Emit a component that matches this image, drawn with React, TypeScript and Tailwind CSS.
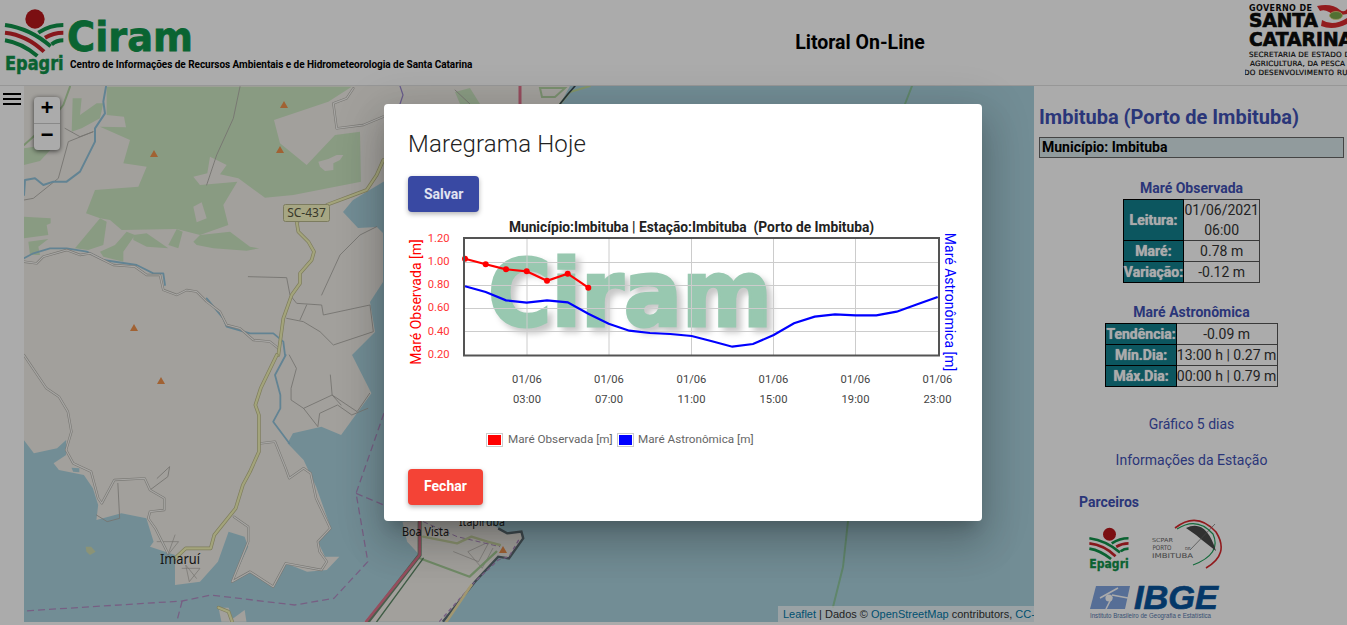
import React from "react";

const Z7 = "translate(0 85) scale(0.33333)";
const Z8 = "translate(0 355) scale(0.35714 0.33333)";

const LAND = "#f2efe9";
const FOREST = "#cde7c2";
const WATER = "#aad3df";

const coastZ8 =
  "1040,115 955,240 900,215 820,235 805,265 850,315 885,395 920,500 925,520 890,560 910,605 950,605 915,645 860,650 800,625 765,695 700,650 650,680 695,575 685,545 640,530 610,620 560,680 490,690 490,600 420,575 430,560 410,490 340,475 270,495 275,450 260,400 235,360 165,345 150,325 185,300 185,255 160,280 95,295 67,255";

const westLand =
  "24,86 570,86 560,104 500,130 383,182 353,200 343,212 358,228 377,227 383,233 383,282 370,302 375,332 352,355 " +
  coastZ8
    .split(" ")
    .map((s) => {
      const [x, y] = s.split(",").map(Number);
      return `${(x / 2.8).toFixed(1)},${(355 + y / 3).toFixed(1)}`;
    })
    .join(" ") +
  " 24,440";

function Line({ p, c, w, dash }: { p: string; c: string; w: number; dash?: string }) {
  return (
    <polyline
      points={p}
      fill="none"
      stroke={c}
      strokeWidth={w}
      strokeDasharray={dash}
      strokeLinejoin="round"
      strokeLinecap={dash ? "butt" : "round"}
      vectorEffect="non-scaling-stroke"
    />
  );
}

function Cased({ p }: { p: string }) {
  return (
    <>
      <Line p={p} c="#b4b2ac" w={2.4} />
      <Line p={p} c="#f8f7f3" w={1.2} />
    </>
  );
}

function Yellow({ p }: { p: string }) {
  return (
    <>
      <Line p={p} c="#bcbb8a" w={3.6} />
      <Line p={p} c="#f4f5b8" w={2.2} />
    </>
  );
}

function Peak({ x, y }: { x: number; y: number }) {
  return <polygon points={`${x},${y - 4} ${x + 4},${y + 3} ${x - 4},${y + 3}`} fill="#f0924c" />;
}

function MapArt() {
  const thin = "#b0aea8";
  const river = "#93c4dc";
  const admin = "#b28ec4";
  return (
    <svg viewBox="24 86 1010 536" className="block h-full w-full">
      <rect x="24" y="86" width="1010" height="536" fill={WATER} />
      <polygon points={westLand} fill={LAND} />
      <g transform={Z8}>
        <polygon
          fill={LAND}
          points="1127,500 1140,560 1175,600 1020,800 1240,800 1330,680 1395,605 1425,610 1465,550 1460,530 1420,535 1380,510 1300,490"
        />
        <polyline
          points="1240,800 1330,680 1395,605 1425,610 1465,550 1460,530 1420,535 1395,520"
          fill="none"
          stroke="#5f6f76"
          strokeWidth="2.4"
          vectorEffect="non-scaling-stroke"
        />
        <polygon points="612,758 640,758 655,800 620,800" fill={LAND} />
        <polygon points="640,800 685,765 690,800" fill={LAND} />
        <polygon points="240,575 255,575 268,590 252,600 242,590" fill="#cfdcb0" />
        <polygon points="200,338 222,340 222,352 205,350" fill={WATER} />
      </g>
      <g transform={Z7}>
        <polygon points="72,240 72,190 170,175 120,228" fill={FOREST} />
        <polygon points="218,40 245,40 240,90 290,55 310,55 300,100 245,130 215,140" fill={FOREST} />
        <polygon
          fill={FOREST}
          points="320,5 1055,5 985,50 822,105 840,175 920,240 1005,150 1080,140 1083,290 880,330 795,338 715,280 660,268 680,240 630,215 622,265 580,275 600,300 712,290 670,360 685,420 600,450 530,432 365,435 330,405 300,400 258,385 285,315 415,305 440,245 370,235 390,165 300,125 378,127 372,95 320,90"
        />
        <polygon points="580,365 605,352 620,400 590,412" fill={LAND} />
        <polygon points="505,480 530,432 548,440 535,490" fill={FOREST} />
        <polygon points="580,470 600,450 690,440 750,485 778,490 740,497 640,490 590,480" fill={FOREST} />
        <polygon points="400,450 440,445 505,490 440,485 400,465" fill={FOREST} />
        <polygon points="345,480 380,440 405,450 370,500 370,530 310,515 300,500" fill={FOREST} />
        <polygon points="225,490 300,400 320,410 310,480 265,495" fill={FOREST} />
        <polygon points="72,395 152,400 152,415 140,420 145,450 72,460" fill={FOREST} />
        <polygon points="85,470 145,462 115,485 120,510 90,510" fill={FOREST} />
        <polygon points="955,230 985,222 1010,210 1030,210 1020,225 1000,235 1000,255 975,258 960,245" fill={LAND} />
        <Line p="72,180 150,110 190,60 210,5" c="#b5d6a5" w={2} />
        <Line p="195,130 240,155 280,140 205,170 175,280 100,340 72,345" c={thin} w={0.9} />
        <Line p="720,5 700,100 650,210 620,300" c={thin} w={0.9} />
        <Line p="745,575 860,578 870,630 890,655 965,660 970,690 1110,660 1120,740 1000,780 960,740 910,710 860,700" c={thin} w={0.9} />
        <Line p="965,630 1020,510 1080,450 1130,425" c={thin} w={0.9} />
        <Line p="920,660 900,705" c={thin} w={0.9} />
        <Line p="318,5 310,50 315,85 285,130 285,170 240,260 200,290 160,290 130,300 105,280 75,285 72,330" c={river} w={2} />
        <Line p="72,520 100,505 150,490 200,490 260,500 310,525 410,540 460,565 490,565 495,600" c={river} w={1.8} />
        <Line p="620,640 670,700 680,725 750,745 820,745 850,770 855,810" c={river} w={1.8} />
        <Cased p="72,530 110,535 130,515 200,495 240,510 270,505 340,540 405,545 440,570 480,570 490,615 530,630 560,615 590,620 620,650 660,680 680,720 720,730 760,765 810,770 835,790" />
        <Cased p="1060,10 1040,40 1000,55 1010,130 1090,120 1150,95" />
        <Yellow p="1150,225 1130,270 1100,315 1060,330 985,358 890,410 895,440 925,470 942,500 935,525 900,565 900,595 875,630 850,700 835,810" />
      </g>
      <g transform={Z8}>
        <Line p="810,0 830,40 815,100 815,135 850,160 930,120 1000,170 1035,115" c={thin} w={0.9} />
        <Line p="850,160 890,215 895,175 945,150 985,180 1030,160" c={thin} w={0.9} />
        <Line p="925,60 930,120 955,150" c={thin} w={0.9} />
        <Line p="440,370 475,335 470,365 420,405" c={thin} w={0.9} />
        <Line p="270,480 300,500 335,490 330,385" c={thin} w={0.9} />
        <Line p="440,560 500,560 470,600 490,540" c={thin} w={0.7} />
        <Line p="510,640 560,640 530,680 520,630 550,670" c={thin} w={0.7} />
        <Line p="1270,590 1340,620 1370,560 1310,590 1350,640 1380,580" c={thin} w={0.7} />
        <Line p="800,0 770,60 785,120 785,160 765,200 810,265" c={river} w={1.8} />
        <Cased p="67,0 130,100 165,125 190,170 195,200 200,230 185,285 205,325 255,350 275,430 285,445 320,375 405,370 420,405 460,430 460,465 420,470 415,490 435,520 470,595" />
        <Cased p="730,265 770,260 800,340 810,370 850,340 870,355 885,430 925,520 890,560 895,590 915,620 900,645 800,625 765,695 700,650 650,680 695,560 695,515 655,485" />
        <Yellow p="775,0 730,100 715,150 725,180 725,290 700,350 680,390 660,460 600,540 590,580 520,580 490,610" />
        <Yellow p="612,758 640,770 650,800" />
        <Line p="1075,175 997,415 1030,620 935,730 825,750 590,720 510,738 67,768" c={admin} w={1.3} dash="7 4" />
        <Line p="997,415 1075,450" c={admin} w={1.3} dash="7 4" />
        <Line p="510,738 495,800" c={admin} w={1.3} dash="7 4" />
        <Line p="1230,800 1330,680 1395,615 1425,605 1455,550" c={admin} w={1.3} dash="4 3" />
        <Line p="1185,500 1280,545 1400,575" c={admin} w={1} dash="5 3" />
        <Line p="1185,545 1280,565 1320,545 1365,560 1400,570" c="#cdd8a4" w={2.4} />
        <Line p="1175,610 1315,665 1390,590" c="#a9d09a" w={2.2} />
        <Line p="1250,800 1320,690" c="#f1e2a8" w={2.6} />
        <Line p="1175,500 1175,600 1030,800" c="#6f8c72" w={4} />
        <Line p="1175,500 1175,600 1025,800" c="#e0738c" w={2.6} />
        <Line p="1185,610 1055,800" c="#5f8a68" w={1.4} />
      </g>
      {/* strip above the dialog */}
      <polygon points="455,92 470,88 480,104 460,104" fill={FOREST} />
      <Line p="400,86 403,95 400,104" c="#9a88cf" w={1.2} />
      <Line p="455,90 470,104" c={thin} w={0.9} />
      <Line p="520,86 520,104" c="#e0738c" w={3} />
      <polygon points="540,88 565,88 555,97 542,97" fill="none" stroke="#b5d6a5" strokeWidth="2" />
      <Line p="590,86 570,92 560,104" c="#c4dd9c" w={2} />
      <Line p="575,86 568,94 560,104" c="#3a4a52" w={1.6} />
      <Line p="912,86 905,104" c="#8fc8a0" w={2} />
      <Line p="848,521 843,567 833,607" c="#8fc8a0" w={2} />
      <Peak x={284} y={105} />
      <Peak x={154} y={154} />
      <Peak x={280} y={150} />
      <Peak x={134} y={328} />
      <Peak x={161} y={381} />
      <Peak x={503} y={550} />
      <g>
        <rect x="283.5" y="204.5" width="46" height="17" rx="2" fill="#f8f8c4" stroke="#b9b98e" />
        <text x="306.5" y="217" textAnchor="middle" fontSize="12" fill="#55553f" fontFamily="'Noto Sans',sans-serif">SC-437</text>
      </g>
      <text x="160" y="564" fontSize="13.5" textLength="40" lengthAdjust="spacingAndGlyphs" fill="#222" fontFamily="'Noto Sans',sans-serif">Imaruí</text>
      <text x="402" y="536" fontSize="12" textLength="47" lengthAdjust="spacingAndGlyphs" fill="#222" fontFamily="'Noto Sans',sans-serif">Boa Vista</text>
      <text x="459" y="526" fontSize="12" textLength="46" lengthAdjust="spacingAndGlyphs" fill="#222" fontFamily="'Noto Sans',sans-serif">Itapirubá</text>
    </svg>
  );
}

function Emblem() {
  return (
    <>
      <circle cx="105" cy="54" r="29" fill="#b8171c" />
      <g fill="none" strokeWidth="12">
        <path d="M15 72 Q90 82 152 136" stroke="#10924a" />
        <path d="M15 95 Q80 102 132 152" stroke="#c9252b" />
        <path d="M15 118 Q65 126 112 165" stroke="#10924a" />
        <path d="M190 72 Q150 72 115 95" stroke="#10924a" />
        <path d="M190 95 Q160 95 135 110" stroke="#c9252b" />
        <path d="M190 118 Q170 118 155 130" stroke="#10924a" />
      </g>
    </>
  );
}

function EpagriWord() {
  return (
    <text x="15" y="206" fontSize="58" fontWeight="700" textLength="176" lengthAdjust="spacingAndGlyphs" fill="#10924a" stroke="#10924a" strokeWidth="1.5" fontFamily="'DejaVu Sans',sans-serif">Epagri</text>
  );
}

function EpagriMark() {
  return (
    <svg viewBox="0 0 210 222" className="h-[74px] w-[70px] shrink-0">
      <Emblem />
      <EpagriWord />
    </svg>
  );
}

function StateLogo() {
  return (
    <svg viewBox="1245 0 102 85" className="h-[85px] w-[102px] shrink-0">
      <g fontFamily="'DejaVu Sans',sans-serif" fill="#0b0b0b">
        <text x="1249" y="11" fontSize="8" fontWeight="700" textLength="63">GOVERNO DE</text>
        <text x="1249" y="27" fontSize="19" fontWeight="700" stroke="#0b0b0b" strokeWidth="0.7" textLength="69" lengthAdjust="spacingAndGlyphs">SANTA</text>
        <text x="1249" y="46" fontSize="19" fontWeight="700" stroke="#0b0b0b" strokeWidth="0.7" textLength="104" lengthAdjust="spacingAndGlyphs">CATARINA</text>
        <text x="1249" y="57" fontSize="7.2" textLength="106" lengthAdjust="spacing" stroke="#0b0b0b" strokeWidth="0.2">SECRETARIA DE ESTADO DA</text>
        <text x="1250" y="66" fontSize="7.2" textLength="95" lengthAdjust="spacing" stroke="#0b0b0b" strokeWidth="0.2">AGRICULTURA, DA PESCA</text>
        <text x="1244" y="75" fontSize="7.2" textLength="118" lengthAdjust="spacing" stroke="#0b0b0b" strokeWidth="0.2">DO DESENVOLVIMENTO RURAL</text>
      </g>
      <path d="M1317 6 Q1332 3 1340 10 Q1344 13 1347 9 L1347 14 Q1335 17 1329 12 Q1324 9 1320 11 Z" fill="#dc2a2e" />
      <path d="M1322 20 Q1333 27 1347 18 L1347 24 Q1333 31 1321 26 Z" fill="#dc2a2e" />
      <ellipse cx="1336" cy="15.5" rx="6.5" ry="4" fill="#7ba84c" stroke="#e6d98a" strokeWidth="0.8" />
    </svg>
  );
}

function Chart() {
  const red = "465,258.7 485.7,264.3 506,269.3 526.7,271.3 547,280.7 567.7,273.7 588.3,287.7";
  const redPts = red.split(" ").map((s) => s.split(",").map(Number));
  const blue =
    "465,286.3 485.7,292 506,300.3 526.7,302.7 547,300.3 567.7,302.3 588.3,313.7 608.7,323.7 629.3,330.7 650,333 670.3,334 691.7,336 712,341.3 732.3,346.7 753,344 773.7,335 794,323.3 814.7,316.7 835,314.3 855.7,315.3 876.3,315.3 896.7,311.7 917.3,304.3 937.7,297";
  const xs = [
    [527, "03:00"],
    [609, "07:00"],
    [691.5, "11:00"],
    [773.5, "15:00"],
    [855.5, "19:00"],
    [937.5, "23:00"],
  ] as const;
  const ys = [
    [242, "1.20"],
    [265, "1.00"],
    [288, "0.80"],
    [311, "0.60"],
    [335, "0.40"],
    [358, "0.20"],
  ] as const;
  return (
    <svg viewBox="408 216 550 194" className="mt-1 block h-[194px] w-[550px]" fontFamily="Roboto,sans-serif">
      <text x="691.5" y="231.5" textAnchor="middle" fontSize="13.75" fontWeight="700" fill="#222" xmlSpace="preserve">Município:Imbituba | Estação:Imbituba  (Porto de Imbituba)</text>
      <text x="488" y="326" fontSize="92" fontWeight="700" textLength="284" lengthAdjust="spacingAndGlyphs" fill="#98c8b0" stroke="#98c8b0" strokeWidth="3" fontFamily="'DejaVu Sans',sans-serif" className="[filter:drop-shadow(5px_5px_3px_rgba(0,0,0,0.22))]">Ciram</text>
      {[262, 285, 308, 331].map((y) => (
        <line key={y} x1="464" x2="938" y1={y + 0.5} y2={y + 0.5} stroke="#ccc" />
      ))}
      {xs.slice(0, 5).map(([x]) => (
        <line key={x} x1={x} x2={x} y1="238" y2="355" stroke="#ccc" />
      ))}
      <polyline points={blue} fill="none" stroke="#0000ff" strokeWidth="2.2" />
      <polyline points={red} fill="none" stroke="#ff0000" strokeWidth="2.2" />
      {redPts.map(([x, y]) => (
        <circle key={x} cx={x} cy={y} r="3" fill="#ff0000" />
      ))}
      <rect x="464" y="238" width="475" height="117.5" fill="none" stroke="#545454" strokeWidth="2" />
      {ys.map(([y, t]) => (
        <text key={t} x="449.5" y={y} textAnchor="end" fontSize="11.2" fill="#ff3333">{t}</text>
      ))}
      {xs.map(([x, t]) => (
        <g key={t} fontSize="11.2" fill="#444" textAnchor="middle">
          <text x={x} y="383">01/06</text>
          <text x={x} y="403">{t}</text>
        </g>
      ))}
      <text transform="translate(421 302) rotate(-90)" textAnchor="middle" fontSize="14" fill="#ff0000">Maré Observada [m]</text>
      <text transform="translate(945 302) rotate(90)" textAnchor="middle" fontSize="14" fill="#0000ff">Maré Astronômica [m]</text>
    </svg>
  );
}

function Swatch({ className }: { className: string }) {
  return (
    <span className="block h-[14px] w-[17px] border border-[#ccc] p-[1px]">
      <span className={`block h-full w-full ${className}`} />
    </span>
  );
}

function Dialog() {
  return (
    <div className="absolute left-[384px] top-[104px] h-[417px] w-[598px] rounded-[4px] bg-white p-6 shadow-[0_24px_38px_3px_rgba(0,0,0,0.14),0_9px_46px_8px_rgba(0,0,0,0.12),0_11px_15px_-7px_rgba(0,0,0,0.2)]">
      <h2 className="text-[24px] font-light leading-8 tracking-[0.15px] text-[#222]">Maregrama Hoje</h2>
      <button className="mt-4 h-9 rounded-[4px] bg-[#3949a3] px-4 text-sm font-bold text-white/85 shadow-[0_2px_5px_rgba(0,0,0,0.3)]">Salvar</button>
      <Chart />
      <div className="mt-5 flex h-5 items-center pl-[78px] text-[11.7px] text-[#666]">
        <Swatch className="bg-[#ff0000]" />
        <span className="ml-[5px] w-[109px]">Maré Observada [m]</span>
        <Swatch className="bg-[#0000ff]" />
        <span className="ml-[4px]">Maré Astronômica [m]</span>
      </div>
      <button className="mt-[19px] block h-9 rounded-[4px] bg-[#f44336] px-4 pb-[2px] text-sm font-bold text-white shadow-[0_2px_5px_rgba(0,0,0,0.3)]">Fechar</button>
    </div>
  );
}

function DataTable({ rows, thW, tdW }: { rows: [string, string[]][]; thW: string; tdW: string }) {
  return (
    <table className="mx-auto border-collapse text-center text-sm leading-5">
      <tbody>
        {rows.map(([k, v]) => (
          <tr key={k}>
            <th className={`${thW} border border-black bg-[#13808e] p-0 font-bold text-white [text-shadow:0_0_1px_#fff]`}>{k}</th>
            <td className={`${tdW} border border-[#555] p-0 font-normal text-[#333]`}>
              {v.map((l) => (
                <div key={l} className="whitespace-nowrap">{l}</div>
              ))}
            </td>
          </tr>
        ))}
      </tbody>
    </table>
  );
}

function PartnerLogos() {
  return (
    <svg viewBox="1034 515 313 105" className="mt-[5px] block h-[105px] w-[313px]">
      <svg x="1086" y="520" width="47" height="50" viewBox="0 0 210 222">
        <Emblem />
        <EpagriWord />
      </svg>
      <g fill="none">
        <path d="M1175 526 Q1197 509 1216 530 Q1230 552 1206 566" stroke="#d8282c" strokeWidth="1.6" />
        <path d="M1177 527 Q1197 514 1213 532 Q1222 552 1193 563" stroke="#1fa05a" strokeWidth="1.2" />
      </g>
      <path d="M1186 526 Q1206 516 1216 549 L1202 538 L1196 533 Z" fill="#4a4a4a" />
      <line x1="1215" y1="522" x2="1190" y2="548" stroke="#666" strokeWidth="0.7" />
      <g fontFamily="'DejaVu Sans',sans-serif" fill="#666">
        <text x="1152" y="540" fontSize="5.5" textLength="21" lengthAdjust="spacingAndGlyphs">SCPAR</text>
        <text x="1152.5" y="548" fontSize="6.5" textLength="19" lengthAdjust="spacingAndGlyphs">PORTO</text>
        <text x="1185" y="548" fontSize="4">DE</text>
        <text x="1152" y="555.5" fontSize="6.5" textLength="41" lengthAdjust="spacingAndGlyphs">IMBITUBA</text>
      </g>
      <path d="M1096 584 H1130 L1125 607 H1090 Z" fill="#80a4e0" />
      <path d="M1100 596 L1118 586 M1106 607 L1112 595 M1112 593 L1128 596" stroke="#ffffff" strokeWidth="1.6" />
      <circle cx="1109" cy="596" r="3.6" fill="#ffffff" />
      <text x="1134" y="607" fontSize="33" fontWeight="700" fontStyle="italic" textLength="84" lengthAdjust="spacingAndGlyphs" fill="#08549c" stroke="#08549c" strokeWidth="0.7" fontFamily="'Liberation Sans',sans-serif">IBGE</text>
      <text x="1090" y="616" fontSize="7" textLength="121" lengthAdjust="spacingAndGlyphs" fill="#5478ad" fontFamily="'Liberation Sans',sans-serif">Instituto Brasileiro de Geografia e Estatística</text>
    </svg>
  );
}

function Aside() {
  const heading = "text-center text-sm font-bold leading-5 text-[#3f51b5]";
  const link = "text-center text-sm leading-5 text-[#3f51b5]";
  return (
    <aside className="w-[313px] shrink-0 overflow-hidden">
      <div className="pl-[5px] pr-[3px] pt-[19px]">
        <h1 className="text-[20px] font-bold leading-6 text-[#3f51b5] whitespace-nowrap">Imbituba (Porto de Imbituba)</h1>
        <div className="mt-2 h-[21px] border border-[#666] bg-[#d8e7eb] pl-[2px] text-sm font-bold leading-[19px] text-black">Município: Imbituba</div>
        <h3 className={`mt-5 ${heading}`}>Maré Observada</h3>
        <div className="mt-[1px]">
          <DataTable
            thW="w-[59px]"
            tdW="w-[76px]"
            rows={[
              ["Leitura:", ["01/06/2021", "06:00"]],
              ["Maré:", ["0.78 m"]],
              ["Variação:", ["-0.12 m"]],
            ]}
          />
        </div>
        <h3 className={`mt-[19px] ${heading}`}>Maré Astronômica</h3>
        <div className="mt-[1px]">
          <DataTable
            thW="w-[69px]"
            tdW="w-[101px]"
            rows={[
              ["Tendência:", ["-0.09 m"]],
              ["Mín.Dia:", ["13:00 h | 0.27 m"]],
              ["Máx.Dia:", ["00:00 h | 0.79 m"]],
            ]}
          />
        </div>
        <p className={`mt-[27px] ${link}`}>Gráfico 5 dias</p>
        <p className={`mt-4 ${link}`}>Informações da Estação</p>
        <h3 className="mt-[22px] pl-[40px] text-sm font-bold leading-5 text-[#3f51b5]">Parceiros</h3>
      </div>
      <PartnerLogos />
    </aside>
  );
}

export default function App() {
  return (
    <div className="relative h-[625px] w-[1347px] overflow-hidden bg-white font-[Roboto,sans-serif]">
      <header className="flex h-[86px] border-b border-[#e2e2e2]">
        <div className="flex w-[475px] shrink-0 items-start pt-[1px]">
          <EpagriMark />
          <div className="-ml-[2px] flex flex-col">
            <svg viewBox="0 0 130 55" className="block h-[55px] w-[130px]">
              <text x="-1" y="50" fontSize="41" fontWeight="700" textLength="126" lengthAdjust="spacingAndGlyphs" fill="#0f964b" stroke="#0f964b" strokeWidth="0.8" fontFamily="'DejaVu Sans',sans-serif">Ciram</text>
            </svg>
            <span className="whitespace-nowrap pl-[2px] text-[10px] font-bold leading-[18px] tracking-[-0.03px] text-black">
              Centro de Informações de Recursos Ambientais e de Hidrometeorologia de Santa Catarina
            </span>
          </div>
        </div>
        <div className="flex flex-1 items-center justify-center pt-[1px]">
          <span className="text-[19.5px] font-bold text-black">Litoral On-Line</span>
        </div>
        <StateLogo />
      </header>
      <main className="flex h-[536px]">
        <div className="w-6 shrink-0 pl-[3px] pt-[7px]">
          <div className="flex h-3 w-[18px] flex-col justify-between">
            <span className="block h-[2px] bg-black" />
            <span className="block h-[2px] bg-black" />
            <span className="block h-[2px] bg-black" />
          </div>
        </div>
        <div className="relative w-[1010px] shrink-0 overflow-hidden">
          <MapArt />
          <div className="absolute left-[10px] top-[11px] w-[26px] overflow-hidden rounded-[4px] bg-white font-['Liberation_Mono',monospace] text-[22px] font-bold leading-[26px] text-black shadow-[0_1px_5px_rgba(0,0,0,0.65)]">
            <div className="h-[27px] border-b border-[#ccc] text-center">+</div>
            <div className="h-[26px] text-center">−</div>
          </div>
          <div className="absolute bottom-0 right-0 h-4 w-[256px] overflow-hidden whitespace-nowrap bg-white/70 px-[5px] font-['Liberation_Sans',sans-serif] text-[11px] leading-4 text-[#333]">
            <span className="text-[#0078a8]">Leaflet</span> | Dados © <span className="text-[#0078a8]">OpenStreetMap</span> contributors, <span className="text-[#0078a8]">CC-BY-SA</span>
          </div>
        </div>
        <Aside />
      </main>
      <div className="absolute inset-0 bg-black/33" />
      <Dialog />
    </div>
  );
}
